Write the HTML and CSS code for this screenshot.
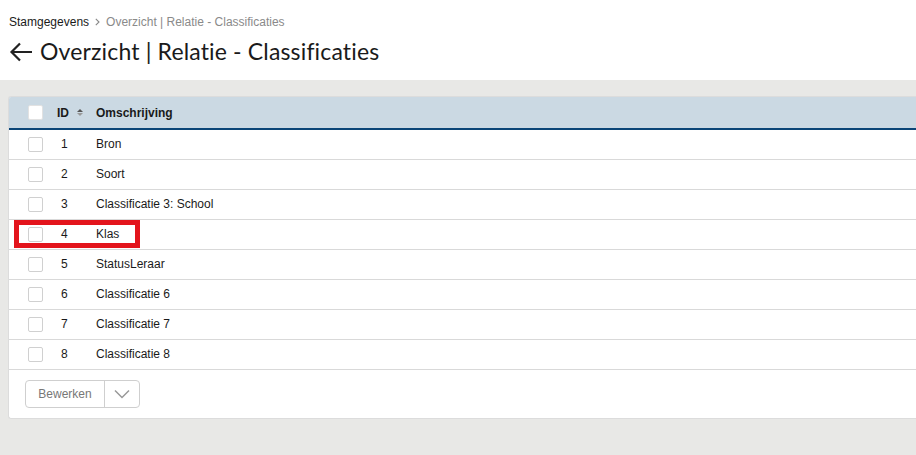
FILE: index.html
```html
<!DOCTYPE html>
<html lang="nl">
<head>
<meta charset="utf-8">
<title>Overzicht | Relatie - Classificaties</title>
<link rel="stylesheet" href="styles.css">
</head>
<body>
<header class="page-head">
  <nav class="crumbs"><span class="crumb-root">Stamgegevens</span><svg class="crumb-sep" width="5" height="8" viewBox="0 0 5 8"><path d="M0.8 0.8 L4 4 L0.8 7.2" fill="none" stroke="#888" stroke-width="1.1"/></svg><span class="crumb-current">Overzicht | Relatie - Classificaties</span></nav>
  <h1 class="title">
    <svg class="back" width="24" height="20" viewBox="0 0 24 20"><path d="M11 1.5 L2.5 10 L11 18.5 M2.5 10 H23" fill="none" stroke="#222" stroke-width="2.2"/></svg>
    <span>Overzicht | Relatie - Classificaties</span>
  </h1>
</header>
<main class="content">
  <section class="card">
    <table class="grid">
      <thead>
        <tr>
          <th class="c-check"><span class="box"></span></th>
          <th class="c-id">ID <span class="sort"><i class="up"></i><i class="down"></i></span></th>
          <th class="c-desc">Omschrijving</th>
        </tr>
      </thead>
      <tbody>
        <tr><td class="c-check"><span class="box"></span></td><td class="c-id">1</td><td class="c-desc">Bron</td></tr>
        <tr><td class="c-check"><span class="box"></span></td><td class="c-id">2</td><td class="c-desc">Soort</td></tr>
        <tr><td class="c-check"><span class="box"></span></td><td class="c-id">3</td><td class="c-desc">Classificatie 3: School</td></tr>
        <tr class="marked"><td class="c-check"><span class="box"></span><span class="highlight"></span></td><td class="c-id">4</td><td class="c-desc">Klas</td></tr>
        <tr><td class="c-check"><span class="box"></span></td><td class="c-id">5</td><td class="c-desc">StatusLeraar</td></tr>
        <tr><td class="c-check"><span class="box"></span></td><td class="c-id">6</td><td class="c-desc">Classificatie 6</td></tr>
        <tr><td class="c-check"><span class="box"></span></td><td class="c-id">7</td><td class="c-desc">Classificatie 7</td></tr>
        <tr><td class="c-check"><span class="box"></span></td><td class="c-id">8</td><td class="c-desc">Classificatie 8</td></tr>
      </tbody>
    </table>
    <div class="card-foot">
      <div class="split-btn">
        <button class="btn-main">Bewerken</button>
        <button class="btn-drop"><svg width="16" height="10" viewBox="0 0 16 10"><path d="M1 1.5 L8 8.5 L15 1.5" fill="none" stroke="#999" stroke-width="1.5"/></svg></button>
      </div>
    </div>
  </section>
</main>
</body>
</html>
```

FILE: styles.css
```css
* { box-sizing: border-box; }
html, body { margin: 0; padding: 0; }
body {
  font-family: "Liberation Sans", Arial, sans-serif;
  font-size: 12px;
  color: #1a1a1a;
  background: #e8e8e6;
  width: 916px;
  height: 455px;
  overflow: hidden;
}
.page-head {
  background: #fff;
  height: 80px;
  padding: 15px 0 0 9px;
}
.crumbs {
  font-size: 12px;
  line-height: 14px;
  display: flex;
  align-items: center;
}
.crumb-root { color: #1a1a1a; }
.crumb-sep { display: block; margin: 0 6px 0 6px; }
.crumb-current { color: #8a8a8a; }
.title {
  margin: 9px 0 0 0;
  display: flex;
  align-items: center;
  gap: 7px;
  font-family: "Lato", "Noto Sans", sans-serif;
  font-weight: 400;
  font-size: 23px;
  letter-spacing: 0.15px;
  line-height: 26px;
  color: #1a1a1a;
}
.back { display: block; flex: none; margin-top: 1px; }
.content {
  padding: 16px 0 0 8px;
}
.card {
  background: #fff;
  border: 1px solid #dcdcdc;
  border-right: none;
  border-radius: 3px 0 0 3px;
  overflow: hidden;
}
.grid {
  width: 100%;
  border-collapse: collapse;
}
.grid thead th {
  background: #cbd9e3;
  height: 32px;
  border-bottom: 2px solid #0b4577;
  text-align: left;
  font-weight: bold;
  padding: 0;
  vertical-align: middle;
}
.grid tbody td {
  height: 30px;
  border-bottom: 1px solid #d9d9d9;
  padding: 0;
  vertical-align: middle;
}
.c-check { width: 48px; padding-left: 19px !important; position: relative; }
.c-id { width: 39px; }
.grid tbody .c-id { padding-left: 4px !important; }
.box {
  display: block;
  width: 15px;
  height: 15px;
  border: 1px solid #d0d0d0;
  border-radius: 2px;
  background: #fff;
}
thead .box { border-color: #e2e2e2; }
.sort {
  display: inline-flex;
  flex-direction: column;
  gap: 1px;
  vertical-align: middle;
  margin-left: 5px;
  margin-top: -2px;
}
.sort i {
  display: block;
  width: 0; height: 0;
  border-left: 3.5px solid transparent;
  border-right: 3.5px solid transparent;
}
.sort .up { border-bottom: 3.5px solid #555; }
.sort .down { border-top: 3.5px solid #999; }
.highlight {
  position: absolute;
  left: 5px;
  top: 0;
  width: 126px;
  height: 28px;
  border: 5px solid #e3141c;
  pointer-events: none;
}
.card-foot {
  padding: 10px 16px 10px 16px;
  height: 48px;
}
.split-btn {
  display: inline-flex;
  border: 1px solid #cfcfcf;
  border-radius: 4px;
  height: 28px;
  background: #fff;
}
.split-btn button {
  background: transparent;
  border: none;
  font-family: "Liberation Sans", Arial, sans-serif;
  font-size: 12px;
  color: #777;
  padding: 0;
  height: 100%;
}
.btn-main { width: 79px; border-right: 1px solid #cfcfcf !important; }
.btn-drop { width: 34px; display: flex; align-items: center; justify-content: center; }
.btn-drop svg { display: block; }
```
